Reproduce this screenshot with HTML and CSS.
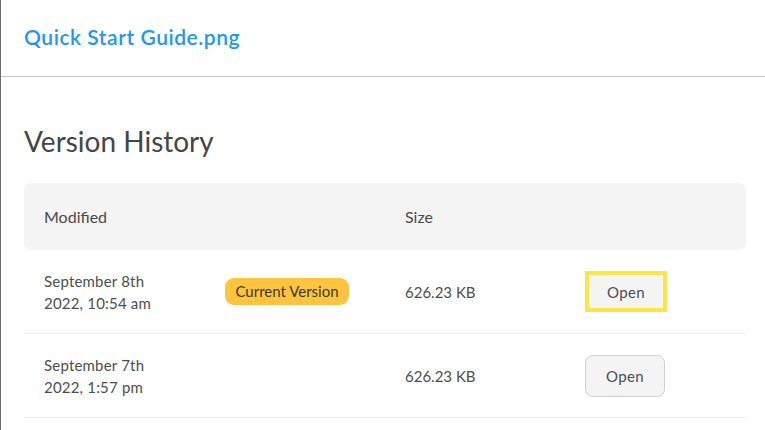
FILE: index.html
```html
<!DOCTYPE html>
<html>
<head>
<meta charset="utf-8">
<link rel="stylesheet" href="styles.css">
</head>
<body>
<div class="panel">
  <header class="topbar">
    <a class="file-title" href="#">Quick Start Guide.png</a>
  </header>
  <main class="content">
    <h1 class="section-title">Version History</h1>
    <div class="table">
      <div class="thead">
        <div class="cell">Modified</div>
        <div class="cell"></div>
        <div class="cell">Size</div>
        <div class="cell"></div>
      </div>
      <div class="row">
        <div class="cell date">September 8th<br>2022, 10:54 am</div>
        <div class="cell"><span class="badge">Current Version</span></div>
        <div class="cell">626.23 KB</div>
        <div class="cell"><button class="btn btn-focus">Open</button></div>
      </div>
      <div class="row">
        <div class="cell date">September 7th<br>2022, 1:57 pm</div>
        <div class="cell"></div>
        <div class="cell">626.23 KB</div>
        <div class="cell"><button class="btn">Open</button></div>
      </div>
    </div>
  </main>
</div>
</body>
</html>
```

FILE: styles.css
```css
html, body {
  margin: 0;
  padding: 0;
  background: #ffffff;
}
body {
  font-family: "Lato", "Noto Sans", sans-serif;
  color: #4a4a4a;
  width: 765px;
  height: 430px;
  overflow: hidden;
}
.panel {
  border-left: 1px solid #6b6b6b;
  height: 430px;
  box-sizing: border-box;
}
.topbar {
  height: 77px;
  border-bottom: 1px solid #c4c4c4;
  box-sizing: border-box;
  display: flex;
  align-items: center;
  padding-left: 23px;
}
.file-title {
  color: #2196f3;
  font-size: 21px;
  font-weight: 600;
  text-decoration: none;
  letter-spacing: 0.55px;
  margin-top: -4px;
}
.content {
  padding: 0 18px 0 23px;
}
.section-title {
  margin: 46px 0 0 0;
  font-size: 28px;
  font-weight: 400;
  color: #454545;
  line-height: 36px;
  height: 60px;
}
.table {
  width: 722px;
}
.thead, .row {
  display: grid;
  grid-template-columns: 181px 180px 180px 181px;
  align-items: center;
}
.thead {
  background: #f4f4f4;
  border-radius: 7px;
  height: 67px;
  font-size: 16px;
  color: #4a4a4a;
}
.row {
  height: 84px;
  box-sizing: border-box;
  border-bottom: 1px solid #ececec;
  font-size: 15px;
  color: #4d4d4d;
}
.cell {
  padding-left: 20px;
}
.date {
  line-height: 22px;
  letter-spacing: 0.2px;
}
.badge {
  display: inline-block;
  background: #fcc43f;
  color: #3d3a2c;
  font-size: 15px;
  height: 27px;
  line-height: 27px;
  padding: 0;
  border-radius: 9px;
  width: 124px;
  box-sizing: border-box;
  text-align: center;
}
.btn {
  font-family: inherit;
  font-size: 15px;
  letter-spacing: 0.3px;
  color: #4d4d5a;
  background: #f4f4f4;
  border: 1px solid #cfcfcf;
  border-radius: 8px;
  width: 80px;
  height: 42px;
  box-sizing: border-box;
  padding: 0;
  margin-top: 1px;
}
.btn-focus {
  border: 4px solid #fde547;
  border-radius: 0;
  width: 82px;
  height: 41px;
  margin-top: 0;
}
```
